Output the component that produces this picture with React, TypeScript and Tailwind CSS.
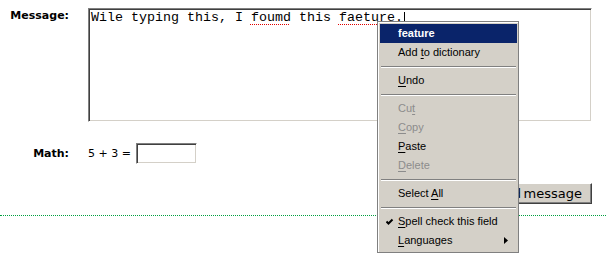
import React from "react";

const ui = { fontFamily: '"DejaVu Sans", Verdana, sans-serif' };
const mono = { fontFamily: '"Liberation Mono", "Courier New", monospace' };
const menuFont = { fontFamily: '"Liberation Sans", Tahoma, Arial, sans-serif' };

type Item =
  | { kind: "sep" }
  | { kind: "item"; pre?: string; key?: string; post?: string; bold?: boolean; active?: boolean; disabled?: boolean; check?: boolean; sub?: boolean };

const menu: Item[] = [
  { kind: "item", pre: "feature", bold: true, active: true },
  { kind: "item", pre: "Add ", key: "t", post: "o dictionary" },
  { kind: "sep" },
  { kind: "item", key: "U", post: "ndo" },
  { kind: "sep" },
  { kind: "item", pre: "Cu", key: "t", disabled: true },
  { kind: "item", key: "C", post: "opy", disabled: true },
  { kind: "item", key: "P", post: "aste" },
  { kind: "item", key: "D", post: "elete", disabled: true },
  { kind: "sep" },
  { kind: "item", pre: "Select ", key: "A", post: "ll" },
  { kind: "sep" },
  { kind: "item", key: "S", post: "pell check this field", check: true },
  { kind: "item", key: "L", post: "anguages", sub: true },
];

function ContextMenu() {
  return (
    <div
      className="absolute left-[377px] top-[21px] w-[142px] border border-[#808080] bg-[#d4d0c8] p-[2px] pr-[1px] text-[11px] shadow-[inset_1px_1px_0_#ffffff]"
      style={menuFont}
    >
      {menu.map((it, i) =>
        it.kind === "sep" ? (
          <div key={i} className="flex h-[9px] flex-col justify-center px-[1px]">
            <div className="border-t border-b border-t-[#808080] border-b-white" />
          </div>
        ) : (
          <div
            key={i}
            className={
              "flex h-[19px] items-center leading-none " +
              (it.active ? "bg-[#0a246a] text-white" : it.disabled ? "text-[#8c8c8c]" : "text-black")
            }
          >
            <span className="flex w-[18px] shrink-0 justify-center pl-[2px]">
              {it.check && (
                <svg width="8" height="8" viewBox="0 0 8 8">
                  <path d="M0.5 3.5 L2.5 5.5 L6.5 1.5" fill="none" stroke="#000" strokeWidth="2" />
                </svg>
              )}
            </span>
            <span className={"flex-1 " + (it.bold ? "font-bold" : "")}>
              {it.pre}
              {it.key && <span className="underline underline-offset-[2px]">{it.key}</span>}
              {it.post}
            </span>
            {it.sub && (
              <svg className="mr-[9px]" width="4" height="7" viewBox="0 0 4 7">
                <polygon points="0,0 4,3.5 0,7" fill="#000" />
              </svg>
            )}
          </div>
        )
      )}
    </div>
  );
}

function Typo({ children }: { children: React.ReactNode }) {
  return (
    <span className="underline decoration-dotted decoration-[#e00000] decoration-1 underline-offset-[3px]">
      {children}
    </span>
  );
}

export default function App() {
  return (
    <div className="relative h-[256px] w-[606px] overflow-hidden bg-white text-black" style={ui}>
      <div className="w-[592px] pt-[8px]">
        <div className="flex">
          <div className="w-[69px] shrink-0 pt-[1px] text-right text-[11px] font-bold leading-[13px]">Message:</div>
          <div className="ml-[19px] h-[114px] w-[504px] shrink-0 border border-t-[#808080] border-l-[#808080] border-r-white border-b-white">
            <div className="h-full w-full pl-[2px] pt-[1px] shadow-[inset_1px_1px_0_#404040,inset_-1px_-1px_0_#d4d0c8]">
              <div className="text-[13.33px] leading-[15px] text-black" style={mono}>
                Wile typing this, I <Typo>foumd</Typo> this <Typo>faeture</Typo>.
                <span className="ml-[1px] inline-block h-[14px] w-px translate-y-[2px] bg-black align-top" />
              </div>
            </div>
          </div>
        </div>

        <div className="mt-[21px] flex items-center">
          <div className="w-[69px] shrink-0 text-right text-[11px] font-bold leading-[13px]">Math:</div>
          <div className="ml-[19px] text-[11px] leading-[13px]">5 + 3 =</div>
          <div className="ml-[5px] h-[21px] w-[61px] border border-t-[#808080] border-l-[#808080] border-r-white border-b-white">
            <div className="h-full w-full shadow-[inset_1px_1px_0_#404040,inset_-1px_-1px_0_#d4d0c8]" />
          </div>
        </div>

        <div className="mt-[19px] flex justify-end">
          <button
            type="button"
            className="flex h-[21px] items-center border border-t-white border-l-white border-r-[#404040] border-b-[#404040] bg-[#d4d0c8] px-[9px] text-[13px] leading-none text-black shadow-[inset_-1px_-1px_0_#808080] [word-spacing:-1.5px]"
            style={ui}
          >
            Send message
          </button>
        </div>
      </div>

      <div className="mt-[11px] border-t border-dotted border-t-[#00a040]" />

      <ContextMenu />
    </div>
  );
}
